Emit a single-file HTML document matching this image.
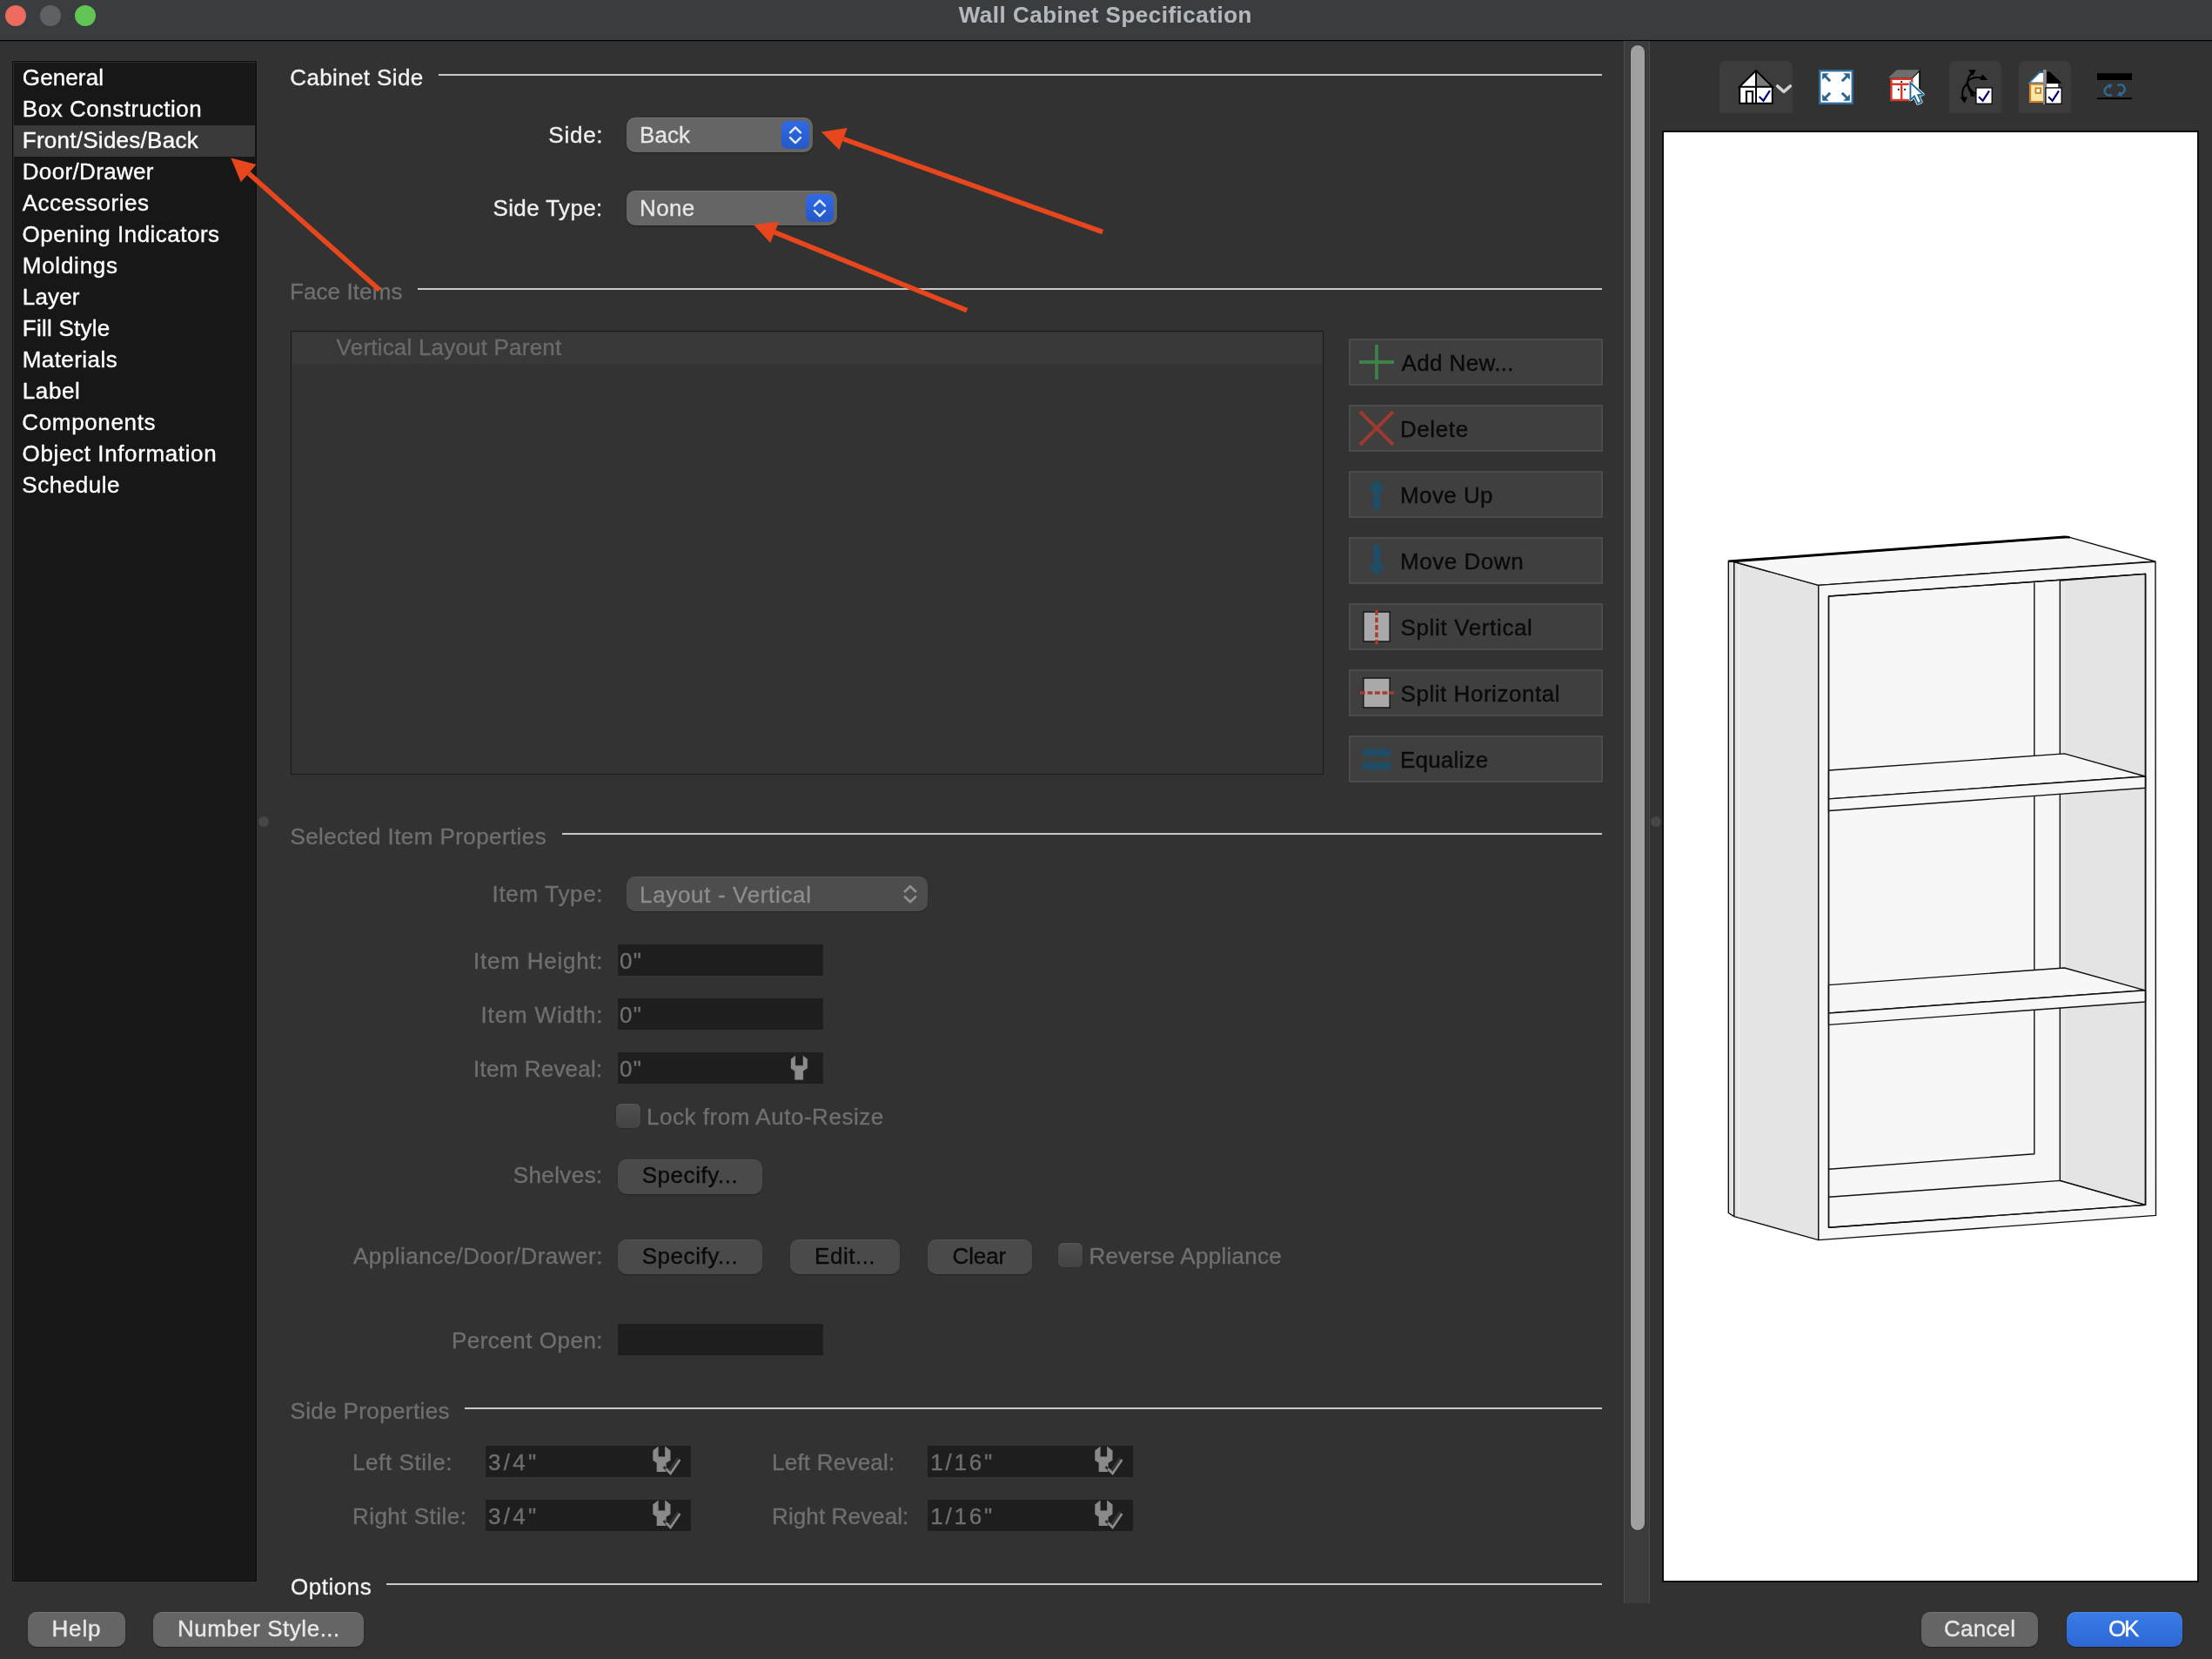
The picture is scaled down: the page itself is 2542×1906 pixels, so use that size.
<!DOCTYPE html>
<html><head><meta charset="utf-8"><title>Wall Cabinet Specification</title>
<style>
html,body{margin:0;padding:0;}
body{width:2542px;height:1906px;overflow:hidden;background:#323232;position:relative;font-family:"Liberation Sans",sans-serif;font-size:26px;}
.a{position:absolute;box-sizing:border-box;}
.t{position:absolute;white-space:nowrap;line-height:26px;font-size:26px;-webkit-text-stroke:0.35px;}
.hl{position:absolute;height:2px;background:#c9c9c9;}
.inp{position:absolute;box-sizing:border-box;background:#1e1e1e;height:36px;}
.pb{position:absolute;box-sizing:border-box;background:#4a4a4a;border-radius:10px;box-shadow:0 1px 1px rgba(0,0,0,.35), inset 0 1px 0 rgba(255,255,255,.05);}
.bb{position:absolute;box-sizing:border-box;background:#656565;border-radius:10px;height:39.5px;top:1852px;box-shadow:0 1px 1.5px rgba(0,0,0,.4), inset 0 1px 0 rgba(255,255,255,.10);}
.rb{position:absolute;box-sizing:border-box;left:1550px;width:292px;height:54px;background:#3f3f3f;border:2px solid #4b4b4b;}
.dd{position:absolute;box-sizing:border-box;background:#656565;border-radius:10px;height:40px;box-shadow:0 1px 1.5px rgba(0,0,0,.4), inset 0 1px 0 rgba(255,255,255,.10);}
.st{position:absolute;width:32px;height:32px;border-radius:7px;background:linear-gradient(#2f6ae6,#2558c8);top:4px;right:4px;}
.cb{position:absolute;box-sizing:border-box;width:28px;height:28px;border-radius:6px;background:linear-gradient(#4f4f4f,#434343);box-shadow:inset 0 1px 0 rgba(255,255,255,.06),0 0 0 0.5px rgba(0,0,0,.2);}
.tb{position:absolute;top:70px;height:60px;border-radius:7px 7px 0 0;background:#3c3c3c;}
svg{position:absolute;overflow:visible;}
</style></head>
<body>
<!-- title bar -->
<div class="a" style="left:0;top:0;width:2542px;height:46px;background:#3a3d40;"></div>
<div class="a" style="left:0;top:46px;width:2542px;height:1px;background:#000;"></div><div class="a" style="left:0;top:47px;width:2542px;height:1px;background:rgba(0,0,0,.22);"></div>
<div class="a" style="left:6px;top:6px;width:24px;height:24px;border-radius:50%;background:#ec6a5e;"></div>
<div class="a" style="left:46px;top:6px;width:24px;height:24px;border-radius:50%;background:#5f6265;"></div>
<div class="a" style="left:86px;top:6px;width:24px;height:24px;border-radius:50%;background:#61c454;"></div>

<!-- sidebar -->
<div class="a" style="left:14px;top:70px;width:281px;height:1747px;background:#171717;border:1px solid #0c0c0c;box-shadow:0 0 0 1px #363636, inset 1px 1px 0 #2e2e2e;"></div>
<div class="a" style="left:16px;top:144px;width:277px;height:36px;background:#3a3a3a;"></div>

<!-- splitter dots -->
<div class="a" style="left:297px;top:938px;width:12px;height:12px;border-radius:50%;background:#474747;"></div>
<div class="a" style="left:1897px;top:938px;width:12px;height:12px;border-radius:50%;background:#474747;"></div>

<!-- group lines -->
<div class="hl" style="left:504px;top:85px;width:1337px;"></div>
<div class="hl" style="left:480px;top:331px;width:1361px;"></div>
<div class="hl" style="left:646px;top:957px;width:1195px;"></div>
<div class="hl" style="left:534px;top:1617px;width:1307px;"></div>
<div class="hl" style="left:444px;top:1819px;width:1397px;"></div>

<!-- dropdowns -->
<div class="dd" style="left:720px;top:135px;width:214px;"><div class="st"><svg width="32" height="32" viewBox="0 0 32 32"><path d="M10 13.3 L16 7.3 L22 13.3 M10 19.2 L16 25.2 L22 19.2" fill="none" stroke="#e4ecff" stroke-width="2.4" stroke-linecap="round" stroke-linejoin="round"/></svg></div></div>
<div class="dd" style="left:720px;top:219px;width:242px;"><div class="st"><svg width="32" height="32" viewBox="0 0 32 32"><path d="M10 13.3 L16 7.3 L22 13.3 M10 19.2 L16 25.2 L22 19.2" fill="none" stroke="#e4ecff" stroke-width="2.4" stroke-linecap="round" stroke-linejoin="round"/></svg></div></div>
<div class="dd" style="left:720px;top:1007px;width:346px;background:#4d4d4d;box-shadow:0 1px 1px rgba(0,0,0,.3), inset 0 1px 0 rgba(255,255,255,.05);"><svg style="right:4px;top:4px" width="32" height="32" viewBox="0 0 32 32"><path d="M9.8 13.2 L16 7.2 L22.2 13.2 M9.8 19.3 L16 25.3 L22.2 19.3" fill="none" stroke="#8f8f8f" stroke-width="2.6" stroke-linecap="round" stroke-linejoin="round"/></svg></div>

<!-- face items list -->
<div class="a" style="left:334px;top:380px;width:1187px;height:510px;background:#333333;border:1.5px solid #1b1b1b;"></div>
<div class="a" style="left:335.5px;top:381.5px;width:1184px;height:36px;background:#383838;"></div>

<!-- right buttons -->
<div class="rb" style="top:389px;"><svg style="left:10px;top:5px" width="40" height="40" viewBox="0 0 40 40"><path d="M0 20H40M20 0V40" stroke="#3d8048" stroke-width="3.8" fill="none"/></svg></div>
<div class="rb" style="top:465px;"><svg style="left:10px;top:5px" width="40" height="40" viewBox="0 0 40 40"><path d="M1 1L39 39M39 1L1 39" stroke="#9c3a30" stroke-width="4" fill="none"/></svg></div>
<div class="rb" style="top:541px;"><svg style="left:10px;top:5px" width="40" height="40" viewBox="0 0 40 40"><path d="M20 2.5 L30.4 14.8 H24.2 V37.5 H15.8 V14.8 H9.6 Z" fill="#1f4d66"/></svg></div>
<div class="rb" style="top:617px;"><svg style="left:10px;top:5px" width="40" height="40" viewBox="0 0 40 40"><path d="M20 37.5 L30.4 25.2 H24.2 V2.5 H15.8 V25.2 H9.6 Z" fill="#1f4d66"/></svg></div>
<div class="rb" style="top:693px;"><svg style="left:10px;top:5px" width="40" height="40" viewBox="0 0 40 40"><rect x="4.8" y="3" width="30.4" height="34" fill="#a9a9a9" stroke="#1c1c1c" stroke-width="1.6"/><path d="M20 0V40" stroke="#a83a30" stroke-width="3.4" stroke-dasharray="5.8 2.7" stroke-dashoffset="-1" fill="none"/></svg></div>
<div class="rb" style="top:769px;"><svg style="left:10px;top:5px" width="40" height="40" viewBox="0 0 40 40"><rect x="4.8" y="3" width="30.4" height="34" fill="#a9a9a9" stroke="#1c1c1c" stroke-width="1.6"/><path d="M0 20H40" stroke="#a83a30" stroke-width="3.4" stroke-dasharray="5.8 2.7" stroke-dashoffset="-1" fill="none"/></svg></div>
<div class="rb" style="top:845px;"><svg style="left:10px;top:5px" width="40" height="40" viewBox="0 0 40 40"><rect x="4" y="8.6" width="32.4" height="8.2" fill="#1f4d66"/><rect x="4" y="23.5" width="32.4" height="8.7" fill="#1f4d66"/></svg></div>

<!-- inputs -->
<div class="inp" style="left:710px;top:1084.5px;width:236px;"></div>
<div class="inp" style="left:710px;top:1146.5px;width:236px;"></div>
<div class="inp" style="left:710px;top:1208.5px;width:236px;"></div>
<div class="inp" style="left:710px;top:1520.5px;width:236px;"></div>
<div class="inp" style="left:558px;top:1660.5px;width:236px;"></div>
<div class="inp" style="left:558px;top:1722.5px;width:236px;"></div>
<div class="inp" style="left:1066px;top:1660.5px;width:236px;"></div>
<div class="inp" style="left:1066px;top:1722.5px;width:236px;"></div>

<!-- checkboxes -->
<div class="cb" style="left:708px;top:1268px;"></div>
<div class="cb" style="left:1216px;top:1428px;"></div>

<!-- push buttons -->
<div class="pb" style="left:710px;top:1332px;width:166px;height:39.5px;"></div>
<div class="pb" style="left:710px;top:1424px;width:166px;height:39.5px;"></div>
<div class="pb" style="left:908px;top:1424px;width:126px;height:39.5px;"></div>
<div class="pb" style="left:1066px;top:1424px;width:120px;height:39.5px;"></div>

<!-- bottom buttons -->
<div class="bb" style="left:31.5px;width:112.5px;"></div>
<div class="bb" style="left:176px;width:242px;"></div>
<div class="bb" style="left:2208px;width:134px;"></div>
<div class="bb" style="left:2374.5px;width:133.5px;background:linear-gradient(#3a7ce6,#2c68d4);"></div>

<!-- scrollbar -->
<div class="a" style="left:1866px;top:47px;width:30px;height:1795px;background:#3c3c3c;border-left:1px solid #4a4a4a;border-right:1px solid #4a4a4a;"></div>
<div class="a" style="left:1874px;top:51.5px;width:16px;height:1706px;border-radius:8px;background:#a0a0a0;box-shadow:0 0 0 1px rgba(40,40,40,.55);"></div>

<!-- toolbar -->
<div class="tb" style="left:1976px;width:84px;"></div>
<div class="tb" style="left:2240px;width:60px;"></div>
<div class="tb" style="left:2320px;width:60px;"></div>
<svg style="left:1998px;top:80px" width="40" height="40" viewBox="0 0 40 40">
<path d="M20 1 L39 19.8 H1 Z" fill="#fff"/><path d="M20 1 L39 19.8 H20 Z" fill="#7b7b7b"/>
<rect x="1.2" y="19.8" width="37.8" height="19" fill="#fff"/>
<path d="M20 1 L39 19.8 H1 Z M1.2 19.8 V38.8 H38.8 V19.8 M20 1.5 V38.8" fill="none" stroke="#000" stroke-width="2" stroke-linejoin="miter"/>
<path d="M9 38.8 V25 H16 V38.8" fill="none" stroke="#000" stroke-width="2.2"/>
<path d="M23.7 31 L28.5 35.7 L35.9 24.2" fill="none" stroke="#00007a" stroke-width="2.2"/>
</svg>
<svg style="left:2040px;top:95px" width="20" height="14" viewBox="0 0 20 14"><path d="M2.6 3.9 L10 10.4 L17.4 3.9" fill="none" stroke="#d2d2d2" stroke-width="3.4" stroke-linecap="round" stroke-linejoin="round"/></svg>
<svg style="left:2090px;top:80px" width="40" height="40" viewBox="0 0 40 40"><rect x="1.2" y="1.2" width="37.6" height="37.6" fill="#fff" stroke="#2d6a96" stroke-width="2.4"/><path d="M13.2 13.2 L7.199999999999999 7.199999999999999" stroke="#2d6490" stroke-width="3" fill="none"/><path d="M4.199999999999999 4.199999999999999 L11.7 4.199999999999999 L4.199999999999999 11.7 Z" fill="#2d6490"/><path d="M26.8 13.2 L32.8 7.199999999999999" stroke="#2d6490" stroke-width="3" fill="none"/><path d="M35.8 4.199999999999999 L28.299999999999997 4.199999999999999 L35.8 11.7 Z" fill="#2d6490"/><path d="M13.2 26.8 L7.199999999999999 32.8" stroke="#2d6490" stroke-width="3" fill="none"/><path d="M4.199999999999999 35.8 L11.7 35.8 L4.199999999999999 28.299999999999997 Z" fill="#2d6490"/><path d="M26.8 26.8 L32.8 32.8" stroke="#2d6490" stroke-width="3" fill="none"/><path d="M35.8 35.8 L28.299999999999997 35.8 L35.8 28.299999999999997 Z" fill="#2d6490"/></svg>
<svg style="left:2170px;top:80px" width="40" height="40" viewBox="0 0 40 40">
<path d="M27.4 9.6 L36 1 V24 L27.4 35.5 Z" fill="#fff" stroke="#000" stroke-width="1.6"/>
<path d="M9.8 0.3 H36.4 L27.6 9.3 H0 Z" fill="#6e6e6e"/>
<rect x="3.4" y="10.8" width="23.6" height="24.2" fill="#fff" stroke="#d8392a" stroke-width="2.4"/>
<path d="M3.4 16.8 H27 M15.2 16.8 V35" stroke="#d8392a" stroke-width="2.4" fill="none"/>
<circle cx="15.2" cy="14" r="1.1" fill="#000"/><circle cx="11.8" cy="22.8" r="1.1" fill="#000"/><circle cx="19" cy="22.8" r="1.1" fill="#000"/>
<path d="M25.4 15 V34.6 L30 30.6 L33.8 39 L38 37.2 L34.2 29 L40 28.6 Z" fill="#fff" stroke="#fff" stroke-width="3.4" stroke-linejoin="round"/>
<path d="M25.4 15 V34.6 L30 30.6 L33.8 39 L38 37.2 L34.2 29 L40 28.6 Z" fill="#fff" stroke="#1f6a9a" stroke-width="1.9" stroke-linejoin="miter"/>
</svg>
<svg style="left:2250px;top:80px" width="40" height="40" viewBox="0 0 40 40">
<path d="M17 3.5 C9 9 9 20 18 30" fill="none" stroke="#000" stroke-width="2"/>
<path d="M29 9.5 C18 7.5 11 11 10.5 16" fill="none" stroke="#000" stroke-width="2"/>
<path d="M10.5 16 C4.5 22 4.2 28 6.5 33" fill="none" stroke="#000" stroke-width="2"/>
<path d="M10.5 14 C12 22 16 26 21 28" fill="none" stroke="#000" stroke-width="2"/>
<path d="M12 0.3 H20.8 L17 7 Z" fill="#000"/>
<path d="M28 5 L34.4 12 H25.5 Z" fill="#000"/>
<path d="M2.4 31.4 H11 L7.6 38.6 Z" fill="#000"/>
<path d="M14.2 26.2 L20.5 30.5 L14.8 30.8 Z" fill="#000"/>
<rect x="20.9" y="20.9" width="18.3" height="18.3" fill="#fff" stroke="#000" stroke-width="1.3"/><path d="M24 31.2 L28.6 35.8 L36 24.3" fill="none" stroke="#00007a" stroke-width="2.2"/>
</svg>
<svg style="left:2330px;top:80px" width="40" height="40" viewBox="0 0 40 40">
<path d="M1.4 15.3 L13.8 3 H19 V15.3 Z" fill="#fff" stroke="#2d6a96" stroke-width="1.8"/>
<rect x="3" y="16.6" width="16" height="20.4" fill="#fbe7a8" stroke="#c8802a" stroke-width="2.2"/>
<rect x="9.4" y="21.3" width="5.6" height="5.6" fill="#fff" stroke="#c8802a" stroke-width="1.8"/>
<path d="M21.5 2.4 H25.5 L39.6 15.6 H21.5 Z" fill="#000"/>
<rect x="21.5" y="15.6" width="14.4" height="6" fill="#fff" stroke="#000" stroke-width="1"/>
<rect x="18" y="0" width="3.8" height="40" fill="#8a8a8a"/>
<rect x="20.9" y="20.9" width="18.3" height="18.3" fill="#fff" stroke="#000" stroke-width="1.3"/><path d="M24 31.2 L28.6 35.8 L36 24.3" fill="none" stroke="#00007a" stroke-width="2.2"/>
</svg>
<svg style="left:2410px;top:80px" width="40" height="40" viewBox="0 0 40 40">
<rect x="0" y="4.2" width="40" height="7.8" fill="#000"/>
<rect x="0" y="32.2" width="40" height="1.9" fill="#000"/>
<path d="M16.8 28.6 A5.2 5.2 0 1 1 14.6 19.2" fill="none" stroke="#2d6a96" stroke-width="2.4"/>
<path d="M11.8 16.4 L17.6 17 L14.4 22.2 Z" fill="#2d6a96"/>
<path d="M23.6 18.4 A5.2 5.2 0 1 1 26.2 27.8" fill="none" stroke="#2d6a96" stroke-width="2.4"/>
<path d="M29.2 30.4 L23 29.8 L26.2 24.4 Z" fill="#2d6a96"/>
</svg>

<!-- preview -->
<div class="a" style="left:1910px;top:150px;width:617px;height:1668px;background:#ffffff;border:2px solid #0e0e0e;"></div>
<svg style="left:0;top:0" width="2542" height="1906" viewBox="0 0 2542 1906">
<path d="M1986.3 644.8 L1992.8 645.5 L1992.8 1397.6 L1986.3 1393.5 Z" fill="#e4e4e4" stroke="#111" stroke-width="1.4" stroke-linejoin="round"/>
<path d="M1992.8 645.5 L2089.8 672.4 L2089.8 1424.6 L1992.8 1397.6 Z" fill="#e4e4e4" stroke="#111" stroke-width="1.4" stroke-linejoin="round"/>
<path d="M1998.5 648 V1398.5" stroke="#f1f1f1" stroke-width="1.2" fill="none"/>
<path d="M1992.8 645.5 L2378.5 617.3 L2476.5 645 L2089.8 672.4 Z" fill="#f7f7f7" stroke="#111" stroke-width="1.4" stroke-linejoin="round"/>
<path d="M1986.3 644.8 L2372.5 616.8 L2378.5 617.3" stroke="#000" stroke-width="2.6" fill="none" stroke-linejoin="round"/>
<path d="M2089.8 672.4 L2477 645.2 L2477.5 1396.4 L2089.8 1424.6 Z" fill="#f7f7f7" stroke="#111" stroke-width="1.4" stroke-linejoin="round"/>
<path d="M2101.5 685 L2465.5 659.4 L2465.5 1384.4 L2101.5 1410.3 Z" fill="#f7f7f7" stroke="#111" stroke-width="1.4" stroke-linejoin="round"/>
<path d="M2367.3 667 L2465.5 659.4 L2465.5 1384.4 L2367.3 1356.4 Z" fill="#e4e4e4" stroke="#111" stroke-width="1.4" stroke-linejoin="round"/>
<path d="M2372.3 668.5 V1356" stroke="#eeeeee" stroke-width="1.2" fill="none"/>
<path d="M2337.8 669.3 V1325.7 L2101.5 1343.2" fill="none" stroke="#111" stroke-width="1.4" stroke-linejoin="round"/>
<path d="M2101.5 1375.3 L2367.3 1356.4 L2465.5 1384.4" fill="none" stroke="#111" stroke-width="1.4" stroke-linejoin="round"/>
<path d="M2101.5 885 L2372.5 865.9 L2465.5 892 L2101.5 917.9 Z" fill="#f7f7f7" stroke="#111" stroke-width="1.4" stroke-linejoin="round"/>
<path d="M2101.5 917.9 L2465.5 892 L2465.5 905.2 L2101.5 931.5 Z" fill="#f7f7f7" stroke="#111" stroke-width="1.4" stroke-linejoin="round"/>
<path d="M2101.5 1131.6 L2372.5 1112 L2465.5 1137.8 L2101.5 1164 Z" fill="#f7f7f7" stroke="#111" stroke-width="1.4" stroke-linejoin="round"/>
<path d="M2101.5 1164 L2465.5 1137.8 L2465.5 1151 L2101.5 1177.4 Z" fill="#f7f7f7" stroke="#111" stroke-width="1.4" stroke-linejoin="round"/>
<path d="M2101.5 685 L2465.5 659.4 L2465.5 1384.4 L2101.5 1410.3 Z" fill="none" stroke="#111" stroke-width="1.4" stroke-linejoin="round"/>
</svg>

<svg style="left:908.9px;top:1212.6px" width="40" height="36" viewBox="0 0 40 36"><path d="M4.9 0 L0 3.8 V14.5 L4.4 17.5 V27.4 H13.9 V17.5 L18.8 14.3 V3.8 L13.9 0 V11.2 H4.9 Z" fill="#8c8c8c" stroke="#2e2e2e" stroke-width="1.6" paint-order="stroke"/></svg>
<svg style="left:751.2px;top:1662.5px" width="40" height="36" viewBox="0 0 40 36"><path d="M4.9 0 L0 3.8 V14.5 L4.4 17.5 V27.4 H13.9 V17.5 L18.8 14.3 V3.8 L13.9 0 V11.2 H4.9 Z" fill="#8a8a8a" stroke="#8a8a8a" stroke-width="1.4" stroke-linejoin="miter"/><path d="M13.2 23.2 L19.0 29.4 L30.0 13.4" fill="none" stroke="#333" stroke-width="3" transform="translate(-1.6,-1.2)"/><path d="M14.4 24.4 L19.6 30 L30.4 14" fill="none" stroke="#8c8c8c" stroke-width="2.6"/></svg>
<svg style="left:751.2px;top:1724.5px" width="40" height="36" viewBox="0 0 40 36"><path d="M4.9 0 L0 3.8 V14.5 L4.4 17.5 V27.4 H13.9 V17.5 L18.8 14.3 V3.8 L13.9 0 V11.2 H4.9 Z" fill="#8a8a8a" stroke="#8a8a8a" stroke-width="1.4" stroke-linejoin="miter"/><path d="M13.2 23.2 L19.0 29.4 L30.0 13.4" fill="none" stroke="#333" stroke-width="3" transform="translate(-1.6,-1.2)"/><path d="M14.4 24.4 L19.6 30 L30.4 14" fill="none" stroke="#8c8c8c" stroke-width="2.6"/></svg>
<svg style="left:1259.2px;top:1662.5px" width="40" height="36" viewBox="0 0 40 36"><path d="M4.9 0 L0 3.8 V14.5 L4.4 17.5 V27.4 H13.9 V17.5 L18.8 14.3 V3.8 L13.9 0 V11.2 H4.9 Z" fill="#8a8a8a" stroke="#8a8a8a" stroke-width="1.4" stroke-linejoin="miter"/><path d="M13.2 23.2 L19.0 29.4 L30.0 13.4" fill="none" stroke="#333" stroke-width="3" transform="translate(-1.6,-1.2)"/><path d="M14.4 24.4 L19.6 30 L30.4 14" fill="none" stroke="#8c8c8c" stroke-width="2.6"/></svg>
<svg style="left:1259.2px;top:1724.5px" width="40" height="36" viewBox="0 0 40 36"><path d="M4.9 0 L0 3.8 V14.5 L4.4 17.5 V27.4 H13.9 V17.5 L18.8 14.3 V3.8 L13.9 0 V11.2 H4.9 Z" fill="#8a8a8a" stroke="#8a8a8a" stroke-width="1.4" stroke-linejoin="miter"/><path d="M13.2 23.2 L19.0 29.4 L30.0 13.4" fill="none" stroke="#333" stroke-width="3" transform="translate(-1.6,-1.2)"/><path d="M14.4 24.4 L19.6 30 L30.4 14" fill="none" stroke="#8c8c8c" stroke-width="2.6"/></svg>

<div id="tx" style="position:absolute;left:0;top:0;width:2542px;height:1906px;will-change:transform;"><span class="t" id="title" style="left:1101.70px;top:4.00px;color:#b4b8bb;letter-spacing:0.507px;font-weight:bold;-webkit-text-stroke:0.1px;">Wall Cabinet Specification</span>
<span class="t" id="sb0" style="left:25.80px;top:76.00px;color:#ffffff;letter-spacing:0.117px;">General</span>
<span class="t" id="sb1" style="left:25.76px;top:112.00px;color:#ffffff;letter-spacing:0.537px;">Box Construction</span>
<span class="t" id="sb2" style="left:25.76px;top:148.00px;color:#ffffff;letter-spacing:0.265px;">Front/Sides/Back</span>
<span class="t" id="sb3" style="left:25.76px;top:184.00px;color:#ffffff;letter-spacing:0.341px;">Door/Drawer</span>
<span class="t" id="sb4" style="left:25.75px;top:220.00px;color:#ffffff;letter-spacing:0.505px;">Accessories</span>
<span class="t" id="sb5" style="left:25.61px;top:256.00px;color:#ffffff;letter-spacing:0.485px;">Opening Indicators</span>
<span class="t" id="sb6" style="left:25.76px;top:292.00px;color:#ffffff;letter-spacing:0.751px;">Moldings</span>
<span class="t" id="sb7" style="left:25.76px;top:328.00px;color:#ffffff;letter-spacing:0.169px;">Layer</span>
<span class="t" id="sb8" style="left:25.76px;top:364.00px;color:#ffffff;letter-spacing:0.244px;">Fill Style</span>
<span class="t" id="sb9" style="left:25.76px;top:400.00px;color:#ffffff;letter-spacing:0.426px;">Materials</span>
<span class="t" id="sb10" style="left:25.76px;top:436.00px;color:#ffffff;letter-spacing:0.626px;">Label</span>
<span class="t" id="sb11" style="left:25.34px;top:472.00px;color:#ffffff;letter-spacing:0.646px;">Components</span>
<span class="t" id="sb12" style="left:25.61px;top:508.00px;color:#ffffff;letter-spacing:0.624px;">Object Information</span>
<span class="t" id="sb13" style="left:25.35px;top:544.00px;color:#ffffff;letter-spacing:0.541px;">Schedule</span>
<span class="t" id="g1" style="left:333.29px;top:76.00px;color:#f2f2f2;letter-spacing:0.365px;">Cabinet Side</span>
<span class="t" id="g2" style="left:332.98px;top:322.00px;color:#6f6f6f;letter-spacing:0.092px;">Face Items</span>
<span class="t" id="g3" style="left:333.43px;top:948.00px;color:#6f6f6f;letter-spacing:0.416px;">Selected Item Properties</span>
<span class="t" id="g4" style="left:333.43px;top:1608.00px;color:#6f6f6f;letter-spacing:0.379px;">Side Properties</span>
<span class="t" id="g5" style="left:333.94px;top:1810.00px;color:#f2f2f2;letter-spacing:0.544px;">Options</span>
<span class="t" id="l1" style="left:630.30px;top:142.00px;color:#f0f0f0;letter-spacing:0.757px;">Side:</span>
<span class="t" id="l2" style="left:566.47px;top:226.00px;color:#f0f0f0;letter-spacing:0.386px;">Side Type:</span>
<span class="t" id="l3" style="left:565.51px;top:1014.00px;color:#6f6f6f;letter-spacing:0.685px;">Item Type:</span>
<span class="t" id="l4" style="left:544.05px;top:1091.00px;color:#6f6f6f;letter-spacing:0.760px;">Item Height:</span>
<span class="t" id="l5" style="left:552.51px;top:1153.00px;color:#6f6f6f;letter-spacing:0.856px;">Item Width:</span>
<span class="t" id="l6" style="left:544.05px;top:1215.00px;color:#6f6f6f;letter-spacing:0.194px;">Item Reveal:</span>
<span class="t" id="l7" style="left:589.63px;top:1337.00px;color:#6f6f6f;letter-spacing:0.420px;">Shelves:</span>
<span class="t" id="l8" style="left:405.89px;top:1430.00px;color:#6f6f6f;letter-spacing:0.504px;">Appliance/Door/Drawer:</span>
<span class="t" id="l9" style="left:518.88px;top:1527.00px;color:#6f6f6f;letter-spacing:0.505px;">Percent Open:</span>
<span class="t" id="d1" style="left:735.08px;top:142.00px;color:#e6e6e6;letter-spacing:0.046px;">Back</span>
<span class="t" id="d2" style="left:735.08px;top:226.00px;color:#e6e6e6;letter-spacing:0.357px;">None</span>
<span class="t" id="d3" style="left:735.08px;top:1015.00px;color:#8c8c8c;letter-spacing:0.651px;">Layout - Vertical</span>
<span class="t" id="i1" style="left:712.06px;top:1091.00px;color:#6f6f6f;letter-spacing:1.165px;">0"</span>
<span class="t" id="i2" style="left:712.06px;top:1153.00px;color:#6f6f6f;letter-spacing:1.165px;">0"</span>
<span class="t" id="i3" style="left:712.06px;top:1215.00px;color:#6f6f6f;letter-spacing:1.165px;">0"</span>
<span class="t" id="i4" style="left:560.94px;top:1667.00px;color:#6f6f6f;letter-spacing:3.293px;">3/4"</span>
<span class="t" id="i5" style="left:560.94px;top:1729.00px;color:#6f6f6f;letter-spacing:3.293px;">3/4"</span>
<span class="t" id="i6" style="left:1069.24px;top:1667.00px;color:#6f6f6f;letter-spacing:2.785px;">1/16"</span>
<span class="t" id="i7" style="left:1069.24px;top:1729.00px;color:#6f6f6f;letter-spacing:2.785px;">1/16"</span>
<span class="t" id="s1" style="left:404.88px;top:1667.00px;color:#6f6f6f;letter-spacing:0.620px;">Left Stile:</span>
<span class="t" id="s2" style="left:404.88px;top:1729.00px;color:#6f6f6f;letter-spacing:0.487px;">Right Stile:</span>
<span class="t" id="s3" style="left:887.00px;top:1667.00px;color:#6f6f6f;letter-spacing:0.228px;">Left Reveal:</span>
<span class="t" id="s4" style="left:887.00px;top:1729.00px;color:#6f6f6f;letter-spacing:0.105px;">Right Reveal:</span>
<span class="t" id="c1" style="left:742.98px;top:1270.00px;color:#6f6f6f;letter-spacing:0.536px;">Lock from Auto-Resize</span>
<span class="t" id="c2" style="left:1251.38px;top:1430.00px;color:#6f6f6f;letter-spacing:0.286px;">Reverse Appliance</span>
<span class="t" id="b1" style="left:737.69px;top:1337.00px;color:#0a0a0a;letter-spacing:0.552px;">Specify...</span>
<span class="t" id="b2" style="left:737.69px;top:1430.00px;color:#0a0a0a;letter-spacing:0.552px;">Specify...</span>
<span class="t" id="b3" style="left:936.08px;top:1430.00px;color:#0a0a0a;letter-spacing:0.507px;">Edit...</span>
<span class="t" id="b4" style="left:1094.50px;top:1430.00px;color:#0a0a0a;letter-spacing:-0.106px;">Clear</span>
<span class="t" id="rb0" style="left:1610.52px;top:404.00px;color:#0a0a0a;letter-spacing:0.370px;">Add New...</span>
<span class="t" id="rb1" style="left:1608.93px;top:480.00px;color:#0a0a0a;letter-spacing:0.605px;">Delete</span>
<span class="t" id="rb2" style="left:1608.93px;top:556.00px;color:#0a0a0a;letter-spacing:0.431px;">Move Up</span>
<span class="t" id="rb3" style="left:1608.93px;top:632.00px;color:#0a0a0a;letter-spacing:0.558px;">Move Down</span>
<span class="t" id="rb4" style="left:1609.56px;top:708.00px;color:#0a0a0a;letter-spacing:0.637px;">Split Vertical</span>
<span class="t" id="rb5" style="left:1609.56px;top:784.00px;color:#0a0a0a;letter-spacing:0.542px;">Split Horizontal</span>
<span class="t" id="rb6" style="left:1608.93px;top:860.00px;color:#0a0a0a;letter-spacing:0.213px;">Equalize</span>
<span class="t" id="lt" style="left:386.61px;top:386.00px;color:#6a6a6a;letter-spacing:0.200px;">Vertical Layout Parent</span>
<span class="t" id="bb1" style="left:59.51px;top:1858.00px;color:#e8e8e8;letter-spacing:0.830px;">Help</span>
<span class="t" id="bb2" style="left:203.88px;top:1858.00px;color:#e8e8e8;letter-spacing:0.521px;">Number Style...</span>
<span class="t" id="bb3" style="left:2233.88px;top:1858.00px;color:#e8e8e8;letter-spacing:0.257px;">Cancel</span>
<span class="t" id="bb4" style="left:2422.90px;top:1858.00px;color:#ffffff;letter-spacing:-2.094px;">OK</span></div>

<svg style="left:0;top:0" width="2542" height="1906" viewBox="0 0 2542 1906"><path d="M285.7 199.1 L436.2 333.2" stroke="#e8471e" stroke-width="5.6" fill="none"/><path d="M265.4 181.5 L294.6 188.9 L276.8 209.2 Z" fill="#e8471e"/><path d="M969.1 159.7 L1267.2 266.5" stroke="#e8471e" stroke-width="5.6" fill="none"/><path d="M943.8 151.5 L973.7 147.1 L964.5 172.3 Z" fill="#e8471e"/><path d="M890.2 266.9 L1111.2 356.6" stroke="#e8471e" stroke-width="5.6" fill="none"/><path d="M866 257.9 L895.3 254.7 L885.2 279.1 Z" fill="#e8471e"/></svg>
</body></html>
